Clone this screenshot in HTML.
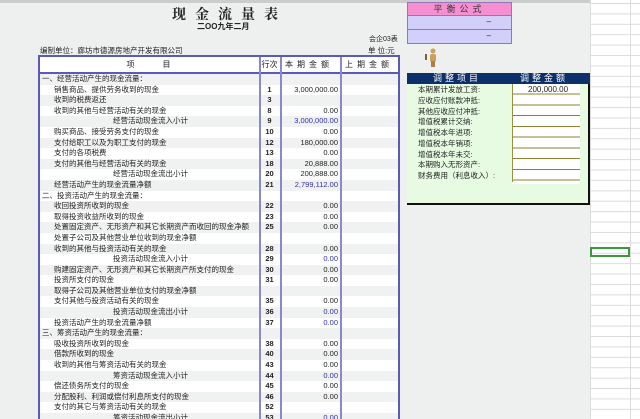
<!DOCTYPE html>
<html><head><meta charset="utf-8"><style>
*{margin:0;padding:0;box-sizing:border-box}
html,body{width:640px;height:419px;overflow:hidden}
body{background:#eef0ef;font-family:"Liberation Sans","Noto Sans CJK SC",sans-serif;font-size:8px;color:#222;position:relative}
.a{position:absolute;white-space:nowrap}
.grid{position:absolute;left:590px;top:0;width:50px;height:419px;background:#fff;
background-image:linear-gradient(#dcdcdc 1px,transparent 1px),linear-gradient(90deg,#dcdcdc 1px,transparent 1px);background-size:40px 10.42px;background-position:0 3px}
.t{position:absolute;left:38px;top:55px;width:362px;height:364px;border:2px solid #5a5ab8;border-bottom:none;background:#fff;overflow:hidden}
.hd{height:17px;border-bottom:2px solid #5a5ab8;display:flex}
.r{height:10.6px;display:flex;line-height:10.6px;font-size:7.5px;overflow:hidden}
.r:nth-child(odd){background:#f0f1f1}
.c1{width:219px;padding-left:2px;overflow:hidden;white-space:nowrap}
.c2{width:21px;text-align:center;font-weight:bold}
.c3{width:60px;text-align:right;padding-right:2px}
.c4{flex:1}
.hd>div{line-height:16px;text-align:center;letter-spacing:4px}
.vl{position:absolute;top:0;bottom:0;width:2px;background:#8888cc}
.b{color:#3030b0}
.s{padding-left:14px}
.c{text-align:center}
.p{position:absolute;left:407px;top:73px;width:183px;height:132px;background:#e6fbe2;border-right:2px solid #111;border-bottom:2px solid #111}
</style></head><body>
<div class="a" style="left:0;top:0;width:640px;height:3px;background:#ccc"></div>
<div class="grid"></div>
<div class="a" style="left:590px;top:247px;width:40px;height:10px;border:2px solid #3a9a3a"></div>
<div class="a" style="left:172px;top:4px;font-size:14px;font-weight:bold;letter-spacing:9px;font-family:'Noto Serif CJK SC',serif">现金流量表</div>
<div class="a" style="left:197px;top:21px;font-size:8px;font-weight:bold">二OO九年二月</div>
<div class="a" style="left:369px;top:34px;font-size:7px">会企03表</div>
<div class="a" style="left:40px;top:45px;font-size:7.5px">编制单位：廊坊市德源房地产开发有限公司</div>
<div class="a" style="left:368px;top:45px;font-size:7.5px">单 位:元</div>
<div class="t">
<div class="hd"><div class="c1">项　　目</div><div class="c2" style="letter-spacing:0;font-weight:normal">行次</div><div class="c3" style="text-align:center">本期金额</div><div class="c4">上期金额</div></div>
<div>
<div class="r"><div class="c1">一、经营活动产生的现金流量：</div><div class="c2"></div><div class="c3"></div><div class="c4"></div></div>
<div class="r"><div class="c1 s">销售商品、提供劳务收到的现金</div><div class="c2">1</div><div class="c3">3,000,000.00</div><div class="c4"></div></div>
<div class="r"><div class="c1 s">收到的税费返还</div><div class="c2">3</div><div class="c3"></div><div class="c4"></div></div>
<div class="r"><div class="c1 s">收到的其他与经营活动有关的现金</div><div class="c2">8</div><div class="c3">0.00</div><div class="c4"></div></div>
<div class="r"><div class="c1 c">经营活动现金流入小计</div><div class="c2">9</div><div class="c3 b">3,000,000.00</div><div class="c4"></div></div>
<div class="r"><div class="c1 s">购买商品、接受劳务支付的现金</div><div class="c2">10</div><div class="c3">0.00</div><div class="c4"></div></div>
<div class="r"><div class="c1 s">支付给职工以及为职工支付的现金</div><div class="c2">12</div><div class="c3">180,000.00</div><div class="c4"></div></div>
<div class="r"><div class="c1 s">支付的各项税费</div><div class="c2">13</div><div class="c3">0.00</div><div class="c4"></div></div>
<div class="r"><div class="c1 s">支付的其他与经营活动有关的现金</div><div class="c2">18</div><div class="c3">20,888.00</div><div class="c4"></div></div>
<div class="r"><div class="c1 c">经营活动现金流出小计</div><div class="c2">20</div><div class="c3">200,888.00</div><div class="c4"></div></div>
<div class="r"><div class="c1 s">经营活动产生的现金流量净额</div><div class="c2">21</div><div class="c3 b">2,799,112.00</div><div class="c4"></div></div>
<div class="r"><div class="c1">二、投资活动产生的现金流量：</div><div class="c2"></div><div class="c3"></div><div class="c4"></div></div>
<div class="r"><div class="c1 s">收回投资所收到的现金</div><div class="c2">22</div><div class="c3">0.00</div><div class="c4"></div></div>
<div class="r"><div class="c1 s">取得投资收益所收到的现金</div><div class="c2">23</div><div class="c3">0.00</div><div class="c4"></div></div>
<div class="r"><div class="c1 s">处置固定资产、无形资产和其它长期资产而收回的现金净额</div><div class="c2">25</div><div class="c3">0.00</div><div class="c4"></div></div>
<div class="r"><div class="c1 s">处置子公司及其他营业单位收到的现金净额</div><div class="c2"></div><div class="c3"></div><div class="c4"></div></div>
<div class="r"><div class="c1 s">收到的其他与投资活动有关的现金</div><div class="c2">28</div><div class="c3">0.00</div><div class="c4"></div></div>
<div class="r"><div class="c1 c">投资活动现金流入小计</div><div class="c2">29</div><div class="c3 b">0.00</div><div class="c4"></div></div>
<div class="r"><div class="c1 s">购建固定资产、无形资产和其它长期资产所支付的现金</div><div class="c2">30</div><div class="c3">0.00</div><div class="c4"></div></div>
<div class="r"><div class="c1 s">投资所支付的现金</div><div class="c2">31</div><div class="c3">0.00</div><div class="c4"></div></div>
<div class="r"><div class="c1 s">取得子公司及其他营业单位支付的现金净额</div><div class="c2"></div><div class="c3"></div><div class="c4"></div></div>
<div class="r"><div class="c1 s">支付其他与投资活动有关的现金</div><div class="c2">35</div><div class="c3">0.00</div><div class="c4"></div></div>
<div class="r"><div class="c1 c">投资活动现金流出小计</div><div class="c2">36</div><div class="c3 b">0.00</div><div class="c4"></div></div>
<div class="r"><div class="c1 s">投资活动产生的现金流量净额</div><div class="c2">37</div><div class="c3 b">0.00</div><div class="c4"></div></div>
<div class="r"><div class="c1">三、筹资活动产生的现金流量：</div><div class="c2"></div><div class="c3"></div><div class="c4"></div></div>
<div class="r"><div class="c1 s">吸收投资所收到的现金</div><div class="c2">38</div><div class="c3">0.00</div><div class="c4"></div></div>
<div class="r"><div class="c1 s">借款所收到的现金</div><div class="c2">40</div><div class="c3">0.00</div><div class="c4"></div></div>
<div class="r"><div class="c1 s">收到的其他与筹资活动有关的现金</div><div class="c2">43</div><div class="c3">0.00</div><div class="c4"></div></div>
<div class="r"><div class="c1 c">筹资活动现金流入小计</div><div class="c2">44</div><div class="c3 b">0.00</div><div class="c4"></div></div>
<div class="r"><div class="c1 s">偿还债务所支付的现金</div><div class="c2">45</div><div class="c3">0.00</div><div class="c4"></div></div>
<div class="r"><div class="c1 s">分配股利、利润或偿付利息所支付的现金</div><div class="c2">46</div><div class="c3">0.00</div><div class="c4"></div></div>
<div class="r"><div class="c1 s">支付的其它与筹资活动有关的现金</div><div class="c2">52</div><div class="c3"></div><div class="c4"></div></div>
<div class="r"><div class="c1 c">筹资活动现金流出小计</div><div class="c2">53</div><div class="c3 b">0.00</div><div class="c4"></div></div>
</div>
<div class="vl" style="left:219px"></div>
<div class="vl" style="left:240px"></div>
<div class="vl" style="left:300px"></div>
</div>
<div class="a" style="left:407px;top:2px;width:105px;height:14px;background:#f58fd0;border:1px solid #9a70c0;text-align:center;line-height:12px;font-size:9px;letter-spacing:4px;color:#333">平衡公式</div>
<div class="a" style="left:407px;top:16px;width:105px;height:14px;background:#d2d0fb;border:1px solid #9a70c0;border-top:none;text-align:right;padding-right:20px;line-height:12px">–</div>
<div class="a" style="left:407px;top:30px;width:105px;height:14px;background:#d2d0fb;border:1px solid #9a70c0;border-top:none;text-align:right;padding-right:20px;line-height:12px">–</div>
<svg class="a" style="left:424px;top:48px" width="14" height="20"><circle cx="9" cy="3" r="2.5" fill="#c9a060"/><rect x="6" y="6" width="6" height="8" rx="2" fill="#c9a060"/><rect x="7" y="13" width="4" height="6" fill="#b08040"/><rect x="1" y="6" width="2" height="6" fill="#7a6040"/></svg>
<div class="p"></div>
<div class="a" style="left:407px;top:73px;width:183px;height:11px;background:#0d2f6a"></div>
<div class="a" style="left:433px;top:73px;color:#fff;font-size:9px;letter-spacing:3px;line-height:11px">调整项目</div>
<div class="a" style="left:520px;top:73px;color:#fff;font-size:9px;letter-spacing:3px;line-height:11px">调整金额</div>
<div class="a" style="left:512px;top:84px;width:68px;height:100px;background:#fff"></div>
<div class="a" style="left:418px;top:85px;font-size:7.5px;line-height:10.75px;white-space:pre">本期累计发放工资:
应收应付账款冲抵:
其他应收应付冲抵:
增值税累计交纳:
增值税本年进项:
增值税本年销项:
增值税本年未交:
本期购入无形资产:
财务费用（利息收入）:</div>
<div class="a" style="left:512px;top:84px;width:68px;height:98px;border-left:1px solid #9a9040;background:repeating-linear-gradient(transparent 0,transparent 9.75px,#8a8030 9.75px,#8a8030 10.75px)"></div>
<div class="a" style="left:528px;top:85px;font-size:8px">200,000.00</div>
</body></html>
